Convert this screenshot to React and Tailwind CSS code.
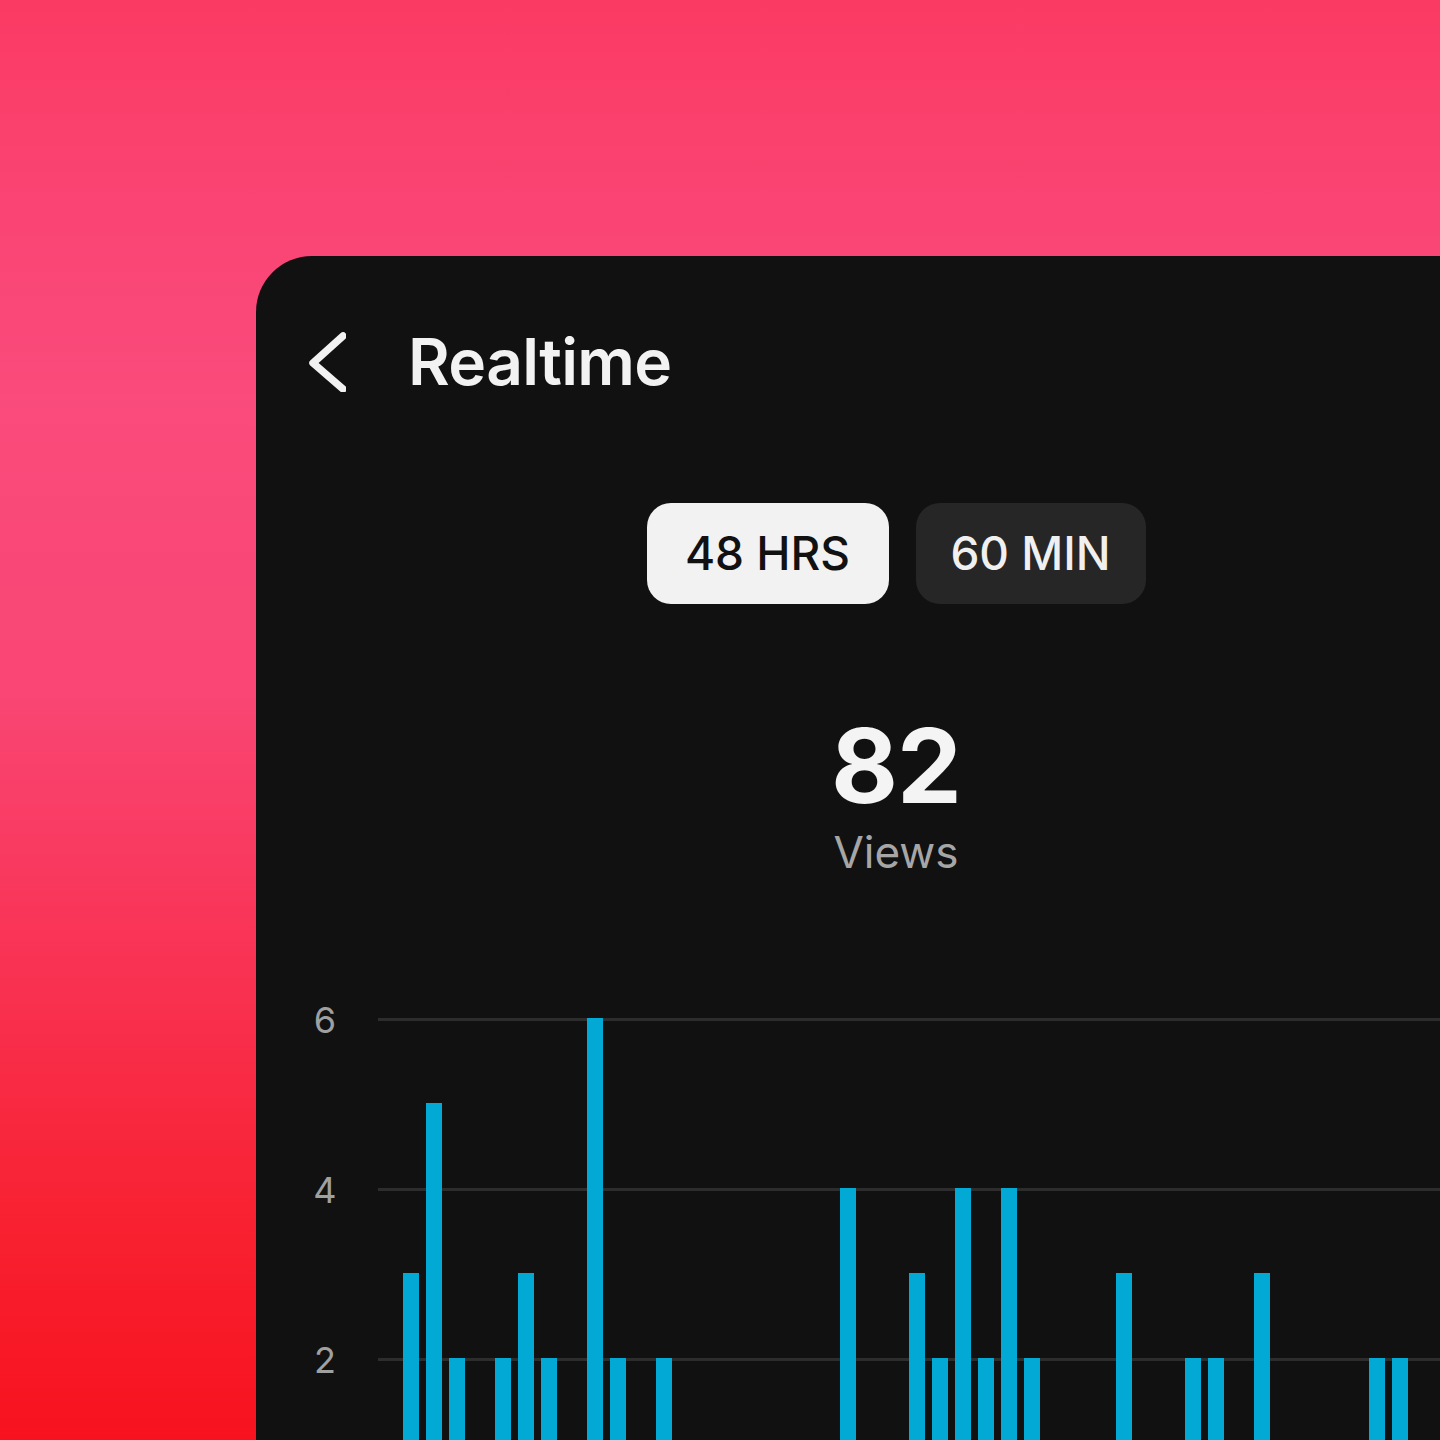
// Realtime views card on a pink gradient backdrop
const views = [
  3, 5, 2, 0, 2, 3, 2, 0, 6, 2, 0, 2, 0, 0, 0, 0, 0, 0, 0, 4, 0, 0, 3, 2,
  4, 2, 4, 2, 0, 0, 0, 3, 0, 0, 2, 2, 0, 3, 0, 0, 0, 0, 2, 2, 0, 0, 0, 0,
];

const UNIT = 85; // px per view on the y-axis

function BackIcon() {
  return (
    <svg width="40" height="60" viewBox="0 0 40 60" fill="none">
      <polyline
        points="37,4 7,31 37,57"
        stroke="#f2f2f2"
        strokeWidth="7.5"
        strokeLinecap="round"
        strokeLinejoin="round"
      />
    </svg>
  );
}

function Chart() {
  const ticks = [6, 4, 2];
  return (
    <div className="relative mt-[144px] h-[520px]">
      {/* Grid rows: label + line */}
      {ticks.map((t) => (
        <div key={t} className="flex h-[170px] items-start">
          <div className="flex h-[3px] w-[122px] items-center pl-[54px]">
            <span className="w-[30px] text-center text-[36px] leading-none text-[#a0a0a0]">
              {t}
            </span>
          </div>
          <div className="h-[3px] flex-1 bg-[#2d2d2d]" />
        </div>
      ))}

      {/* Bars sit over the grid */}
      <div className="absolute left-[147px] top-0 flex h-[510px] items-end gap-[7px]">
        {views.map((v, i) => (
          <div
            key={i}
            className="w-[16px] bg-[#02a9d4]"
            style={{ height: v * UNIT }}
          />
        ))}
      </div>
    </div>
  );
}

export default function App() {
  return (
    <div
      className="relative h-[1440px] w-[1440px] overflow-hidden bg-[linear-gradient(180deg,#fb3a63_0%,#fa4473_14%,#f94b7c_28%,#f94674_48%,#f93355_66%,#f8202f_86%,#f8121f_100%)]"
      style={{ fontFamily: "Inter, 'Noto Sans', sans-serif" }}
    >
      <div className="ml-[256px] mt-[256px] h-[1400px] w-[1280px] rounded-tl-[56px] bg-[#111111]">
        {/* Header */}
        <div className="flex items-center pl-[50px] pt-[74px]">
          <BackIcon />
          <h1 className="ml-[62px] text-[64px] font-semibold leading-none tracking-[-0.01em] text-[#f2f2f2]">
            Realtime
          </h1>
        </div>

        {/* Range toggle */}
        <div className="mt-[109px] flex justify-center gap-[27px]">
          <button className="flex h-[101px] w-[242px] items-center justify-center rounded-[24px] bg-[#f2f2f2] text-[46px] font-medium text-[#111111]">
            48 HRS
          </button>
          <button className="flex h-[101px] w-[230px] items-center justify-center rounded-[24px] bg-[#262626] text-[46px] font-medium text-[#f0f0f0]">
            60 MIN
          </button>
        </div>

        {/* Total */}
        <div className="flex flex-col items-center">
          <div className="mt-[110px] text-[103px] font-bold leading-none tracking-[-0.01em] text-[#f4f4f4]">
            82
          </div>
          <div className="mt-[13px] text-[44px] leading-none text-[#a6a6a6]">
            Views
          </div>
        </div>

        <Chart />
      </div>
    </div>
  );
}
